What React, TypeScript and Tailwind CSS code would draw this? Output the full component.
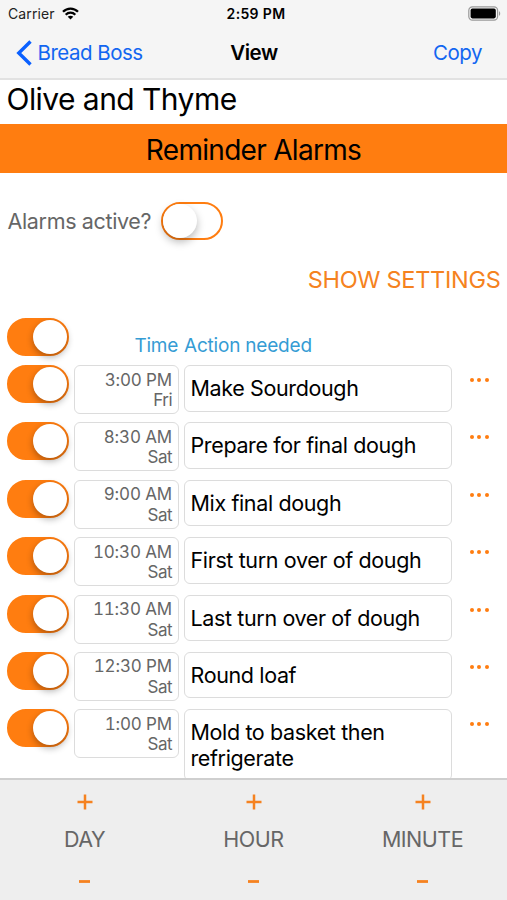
import React, { useState } from 'react';

interface Step {
  time: string;
  day: string;
  action: string;
}

const initialSteps: Step[] = [
  { time: '3:00 PM', day: 'Fri', action: 'Make Sourdough' },
  { time: '8:30 AM', day: 'Sat', action: 'Prepare for final dough' },
  { time: '9:00 AM', day: 'Sat', action: 'Mix final dough' },
  { time: '10:30 AM', day: 'Sat', action: 'First turn over of dough' },
  { time: '11:30 AM', day: 'Sat', action: 'Last turn over of dough' },
  { time: '12:30 PM', day: 'Sat', action: 'Round loaf' },
  { time: '1:00 PM', day: 'Sat', action: 'Mold to basket then refrigerate' },
];

const Toggle: React.FC<{ on: boolean; onChange: () => void }> = ({ on, onChange }) => (
  <button
    role="switch"
    aria-checked={on}
    onClick={onChange}
    className={`flex h-[38px] w-[62px] shrink-0 items-center rounded-full border-2 border-[#ff7d10] ${
      on ? 'justify-end bg-[#ff7d10]' : 'justify-start bg-white'
    }`}
  >
    <span
      className={`h-[34px] w-[34px] rounded-full bg-white ${
        on ? 'shadow-[0_3px_7px_rgba(0,0,0,0.32)]' : 'shadow-[0_4px_8px_rgba(0,0,0,0.28)]'
      }`}
    />
  </button>
);

const StatusBar = () => (
  <div className="flex h-[27px] items-center justify-between pl-[8px] pr-[6px] text-[14px] text-[#222]">
    <div className="flex w-[100px] items-center gap-[7px]">
      <span className="tracking-[0.1px]">Carrier</span>
      <svg width="17" height="13" viewBox="0 0 17 13" fill="none" stroke="#000" strokeWidth="2.3">
        <path d="M1 4.8C5.2 0.5 11.8 0.5 16 4.8" />
        <path d="M3.7 7.7C6.4 5 10.6 5 13.3 7.7" />
        <path d="M8.5 12.6L5.7 9.7C7.3 8.3 9.7 8.3 11.3 9.7Z" fill="#000" stroke="none" />
      </svg>
    </div>
    <span className="pl-[3px] font-semibold tracking-[0.35px] text-black">2:59 PM</span>
    <div className="flex w-[100px] justify-end">
      <svg width="33" height="15" viewBox="0 0 33 15">
        <rect x="0.8" y="0.8" width="28.8" height="13.4" rx="3.6" fill="none" stroke="#999" strokeWidth="1.2" />
        <rect x="2.6" y="2.6" width="25.2" height="9.8" rx="1.8" fill="#000" />
        <path d="M31 5.2C32.6 5.8 32.6 9.2 31 9.8Z" fill="#999" />
      </svg>
    </div>
  </div>
);

const NavBar = () => (
  <div className="grid h-[52px] grid-cols-3 items-center pl-[16px] pr-[25px] text-[20.5px] text-[#1266f1]">
    <button className="flex items-center gap-[5.5px] whitespace-nowrap">
      <svg width="16" height="26" viewBox="0 0 16 26" fill="none" stroke="#0a60ff" strokeWidth="3.4">
        <path d="M14.5 1.5L2.8 13L14.5 24.5" />
      </svg>
      <span className="tracking-[-0.5px]">Bread Boss</span>
    </button>
    <span className="pl-[10px] text-center font-semibold tracking-[-0.45px] text-black">View</span>
    <button className="text-right tracking-[-0.5px]">Copy</button>
  </div>
);

const StepRow: React.FC<{ step: Step; on: boolean; onToggle: () => void }> = ({ step, on, onToggle }) => (
  <div className="flex items-start pl-[7px]">
    <Toggle on={on} onChange={onToggle} />
    <div className="ml-[5px] h-[49px] w-[104.5px] shrink-0 rounded-[6px] border border-[#dcdcdc] pr-[5.5px] pt-[3.5px] text-right text-[17px] leading-[20.5px] text-[#666]">
      <div className="tabular-nums tracking-[-0.15px]">{step.time}</div>
      <div className="tracking-[-0.5px]">{step.day}</div>
    </div>
    <div className="ml-[5.5px] min-h-[46.5px] w-[268px] shrink-0 rounded-[6px] border border-[#dcdcdc] pb-[9px] pl-[5.5px] pr-[12px] pt-[9px] text-[21.5px] leading-[26px] tracking-[-0.37px] text-black">
      {step.action}
    </div>
    <button aria-label="More" className="ml-[16.5px] mt-[12px] flex gap-[3.8px] p-px">
      <span className="h-[4px] w-[4px] rounded-full bg-[#ff7d10]" />
      <span className="h-[4px] w-[4px] rounded-full bg-[#ff7d10]" />
      <span className="h-[4px] w-[4px] rounded-full bg-[#ff7d10]" />
    </button>
  </div>
);

const Stepper: React.FC<{ label: string }> = ({ label }) => (
  <div className="flex flex-1 flex-col items-center">
    <button aria-label={`Add ${label}`} className="mt-[14px] flex h-[16px] items-center">
      <svg width="16" height="16" viewBox="0 0 16 16" stroke="#f58220" strokeWidth="2.5">
        <path d="M0.5 8H15.5M8 0.5V15.5" />
      </svg>
    </button>
    <span className="mt-[16px] text-[21.5px] leading-[26px] tracking-[-0.5px] text-[#666]">{label}</span>
    <button aria-label={`Subtract ${label}`} className="mt-[21.5px] flex h-[16px] items-center">
      <svg width="11" height="3" viewBox="0 0 11 3" stroke="#f58220" strokeWidth="2.8">
        <path d="M0 1.5H11" />
      </svg>
    </button>
  </div>
);

export default function App() {
  const [alarmsActive, setAlarmsActive] = useState(false);
  const [enabled, setEnabled] = useState<boolean[]>(initialSteps.map(() => true));

  const allOn = enabled.every(Boolean);
  const toggleStep = (index: number) => {
    setEnabled(enabled.map((value, i) => (i === index ? !value : value)));
  };

  return (
    <div className="flex h-[900px] w-[507px] flex-col overflow-hidden bg-white font-['Inter',sans-serif]">
      {/* Header */}
      <header className="h-[80px] shrink-0 border-b-2 border-[#e2e2e2] bg-[#f5f5f5]">
        <StatusBar />
        <NavBar />
      </header>

      <main className="min-h-0 flex-1 overflow-hidden">
        <h1 className="h-[44px] pl-[6.5px] text-[30px] leading-[38px] tracking-[-0.55px] text-black">Olive and Thyme</h1>
        <h2 className="h-[49px] bg-[#ff7d10] text-center text-[28px] leading-[52px] tracking-[-0.7px] text-black">
          Reminder Alarms
        </h2>

        <div className="mt-[29px] flex h-[38px] items-center pl-[7.5px]">
          <span className="w-[153.5px] whitespace-nowrap text-[21.5px] tracking-[-0.35px] text-[#666]">Alarms active?</span>
          <Toggle on={alarmsActive} onChange={() => setAlarmsActive(!alarmsActive)} />
        </div>

        <div className="mt-[24px] flex h-[32px] items-center justify-end pr-[6.5px]">
          <button className="text-[23.5px] tracking-[-0.28px] text-[#f58220]">SHOW SETTINGS</button>
        </div>

        {/* Column titles */}
        <div className="mt-[22px] flex h-[47px] items-start pl-[7px] text-[19px] text-[#359cd4]">
          <Toggle on={allOn} onChange={() => setEnabled(enabled.map(() => !allOn))} />
          <span className="mt-[13.5px] w-[109px] text-right tracking-[-0.25px]">Time</span>
          <span className="ml-[6px] mt-[13.5px] tracking-[-0.2px]">Action needed</span>
        </div>

        <div className="flex flex-col">
          {initialSteps.map((step, index) => (
            <div key={step.action} className="h-[57.4px]">
              <StepRow step={step} on={enabled[index]} onToggle={() => toggleStep(index)} />
            </div>
          ))}
        </div>
      </main>

      {/* Time adjustment */}
      <footer className="flex h-[122px] shrink-0 border-t-2 border-[#cfcfcf] bg-[#eee]">
        <Stepper label="DAY" />
        <Stepper label="HOUR" />
        <Stepper label="MINUTE" />
      </footer>
    </div>
  );
}
